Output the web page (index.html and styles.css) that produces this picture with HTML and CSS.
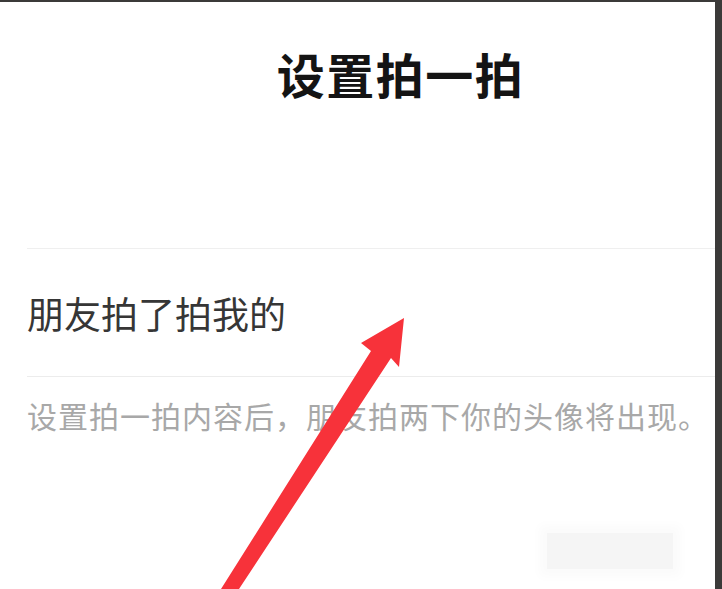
FILE: index.html
```html
<!DOCTYPE html>
<html lang="zh-CN">
<head>
<meta charset="utf-8">
<title>设置拍一拍</title>
<link rel="stylesheet" href="styles.css">
</head>
<body>
<div class="screen">
  <div class="panel">
    <header class="header">
      <h1 class="title">设置拍一拍</h1>
    </header>
    <section class="list">
      <div class="row">朋友拍了拍我的</div>
      <p class="hint">设置拍一拍内容后，朋友拍两下你的头像将出现。</p>
    </section>
    <div class="mosaic"></div>
    <svg class="arrow" width="715" height="587" viewBox="0 2 715 587" aria-hidden="true">
      <polygon points="404,318 361,343 371,351 221,589 239,589 391,358 399,367" fill="#f7323a"/>
    </svg>
  </div>
</div>
</body>
</html>
```

FILE: styles.css
```css
html, body {
  margin: 0;
  padding: 0;
}
body {
  width: 722px;
  height: 589px;
  overflow: hidden;
  font-family: "Noto Sans CJK SC", "Noto Sans", sans-serif;
}
.screen {
  display: flex;
  height: 589px;
  box-sizing: border-box;
  padding-top: 2px;
  background: #3b3a39;
}
.panel {
  position: relative;
  width: 715px;
  height: 587px;
  background: #ffffff;
  overflow: hidden;
}
.header {
  padding: 47px 0 0 86px;
  text-align: center;
}
.title {
  margin: 0;
  font-size: 48px;
  line-height: 48px;
  font-weight: 700;
  color: #141414;
  letter-spacing: 1.5px;
}
.list {
  margin: 151px 0 0 27px;
  border-top: 1px solid #efefef;
}
.row {
  padding: 46px 0 44px;
  font-size: 37px;
  line-height: 37px;
  color: #363636;
  border-bottom: 1px solid #ececec;
}
.hint {
  margin: 23px 0 0;
  font-size: 30px;
  line-height: 30px;
  color: #a8a8a8;
  letter-spacing: 1px;
  white-space: nowrap;
}
.mosaic {
  position: absolute;
  left: 547px;
  top: 531px;
  width: 126px;
  height: 36px;
  background: #f5f5f5;
  box-shadow: 0 0 10px 8px #fbfbfb;
}
.arrow {
  position: absolute;
  left: 0;
  top: 0;
}
```
